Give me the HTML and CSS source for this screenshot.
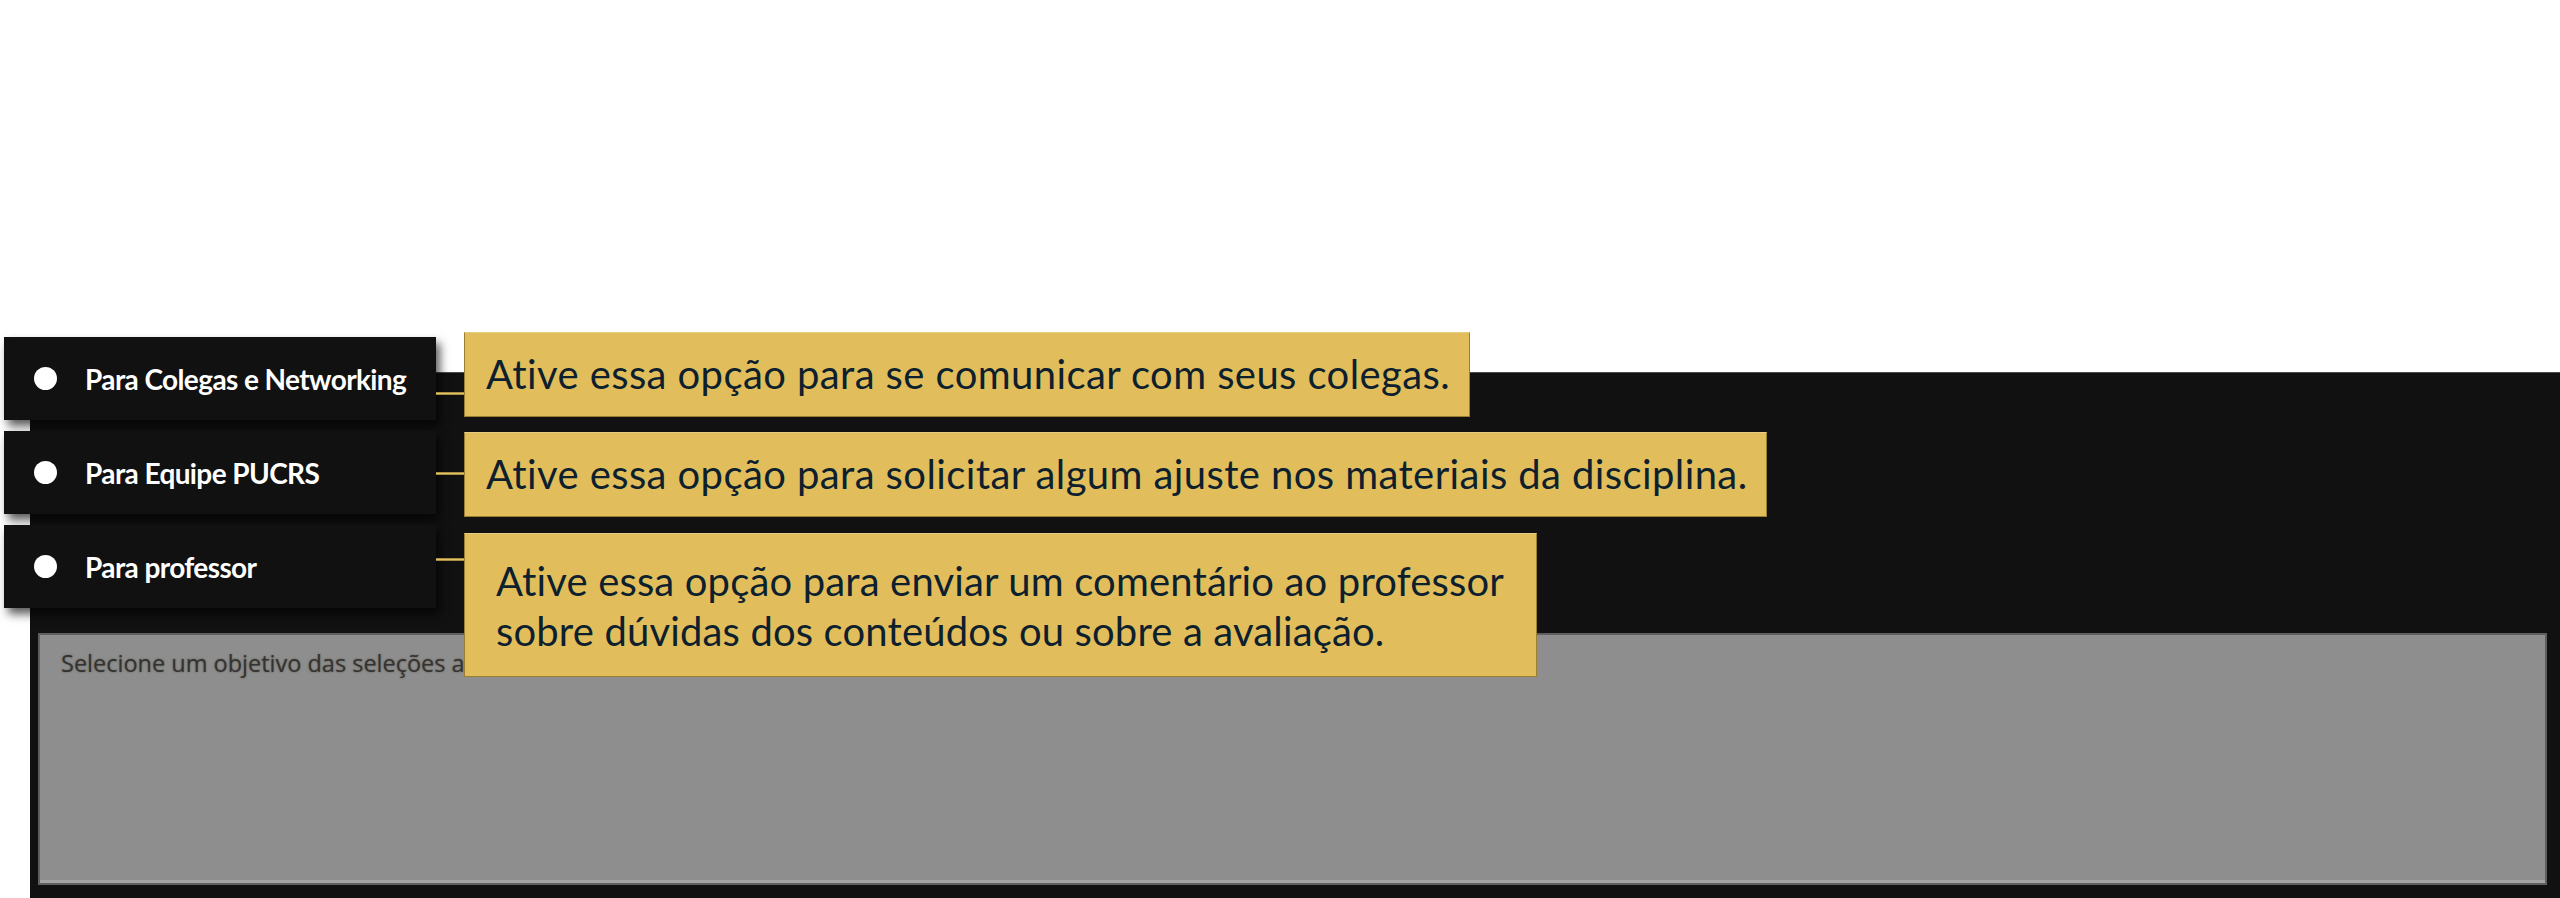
FILE: index.html
```html
<!DOCTYPE html>
<html lang="pt-BR">
<head>
<meta charset="utf-8">
<title>Objetivo do comentário</title>
<link rel="stylesheet" href="styles.css">
</head>
<body>
<main class="stage">
  <div class="callouts">
    <ul class="labels">
      <li class="label label--colegas"><span class="dot"></span>Para Colegas e Networking</li>
      <li class="label label--equipe"><span class="dot"></span>Para Equipe PUCRS</li>
      <li class="label label--prof"><span class="dot"></span>Para professor</li>
    </ul>
    <div class="notes">
      <p class="note note--colegas">Ative essa opção para se comunicar com seus colegas.</p>
      <p class="note note--equipe">Ative essa opção para solicitar algum ajuste nos materiais da disciplina.</p>
      <p class="note note--prof">Ative essa opção para enviar um comentário ao professor<br>sobre dúvidas dos conteúdos ou sobre a avaliação.</p>
    </div>
  </div>
  <section class="panel">
    <div class="field">Selecione um objetivo das seleções acima</div>
  </section>
</main>
</body>
</html>
```
FILE: styles.css
```css
html, body {
  margin: 0;
  padding: 0;
  background: #ffffff;
  overflow: hidden;
}
.stage {
  position: relative;
  box-sizing: border-box;
  width: 2560px;
  height: 898px;
  padding: 372px 0 0 30px;
}
.panel {
  box-sizing: border-box;
  height: 526px;
  background: #111111;
  border-top: 1px solid #4d4d4d;
  padding: 260px 13px 13px 8px;
  display: flex;
}
.field {
  flex: 1;
  box-sizing: border-box;
  background: #8e8e8e;
  border: 2px solid #5f5f5f;
  box-shadow: inset 0 -3px 0 #a4a4a4;
  padding: 12px 21px;
  font-family: "Open Sans", "Noto Sans", sans-serif;
  font-size: 23.5px;
  color: #333333;
  text-shadow: 0 0 2px rgba(60,50,20,0.6);
}
.callouts {
  position: absolute;
  top: 331px;
  left: 4px;
  display: flex;
  align-items: flex-start;
  z-index: 2;
}
.labels {
  list-style: none;
  margin: 6px 0 0 0;
  padding: 0;
  display: flex;
  flex-direction: column;
  gap: 11px;
}
.label {
  position: relative;
  box-sizing: border-box;
  width: 432px;
  height: 83px;
  background: #111111;
  box-shadow: 4px 6px 9px rgba(0,0,0,0.65);
  display: flex;
  align-items: center;
  padding-left: 30px;
  font-family: "Lato", "Noto Sans", sans-serif;
  font-weight: 700;
  font-size: 28px;
  letter-spacing: -0.6px;
  color: #ffffff;
}
.dot {
  width: 23px;
  height: 23px;
  border-radius: 50%;
  background: #ffffff;
  margin-right: 28px;
  flex: none;
}
.label::after {
  content: "";
  position: absolute;
  left: 100%;
  width: 28px;
  height: 3px;
  background: linear-gradient(#8a7330, #e2c265 50%, #8a7330);
}
.label--colegas::after { top: 55px; }
.label--equipe::after { top: 41px; }
.label--prof::after { top: 33px; }
.notes {
  margin: 1px 0 0 28px;
  display: flex;
  flex-direction: column;
  align-items: flex-start;
  gap: 15px;
}
.note {
  margin: 0;
  box-sizing: border-box;
  background: #e1be5b;
  border: 1px solid #9a7f33;
  border-top-color: #e6cc80;
  color: #0e1f2e;
  font-family: "Lato", "Noto Sans", sans-serif;
  font-size: 40px;
  letter-spacing: 0.4px;
  white-space: nowrap;
}
.note--colegas,
.note--equipe {
  height: 85px;
  line-height: 83px;
  padding: 0 19px 0 21px;
}
.note--prof {
  margin-top: 1px;
  height: 144px;
  line-height: 50px;
  letter-spacing: 0.15px;
  padding: 22px 32px 0 31px;
}
```
